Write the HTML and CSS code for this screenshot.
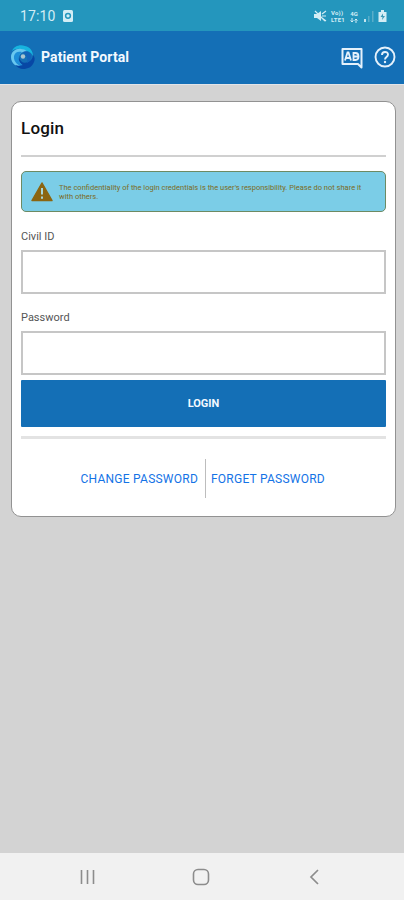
FILE: index.html
```
<!DOCTYPE html>
<html lang="en">
<head>
<meta charset="utf-8">
<title>Patient Portal</title>
<link rel="stylesheet" href="styles.css">
</head>
<body>
<div class="status">
  <span class="time">17:10</span>
  <svg class="app-dot" width="10" height="12" viewBox="0 0 10 12"><rect width="10" height="12" rx="1.5" fill="#d3edf5"/><circle cx="5" cy="5.8" r="2.4" fill="none" stroke="#2496bd" stroke-width="1.5"/></svg>
  <div class="signals">
    <svg width="13" height="12" viewBox="0 0 13 12"><path d="M0 4h3l4-3v10l-4-3H0z" fill="#d3edf5"/><path d="M1 1l10 10M8 4l4-3M8 6h4M8 8l4 3" stroke="#d3edf5" stroke-width="1.2"/></svg>
    <span class="net volte"><span>Vo))</span><span>LTE1</span></span>
    <span class="net lte"><span>4G</span><svg width="8" height="5" viewBox="0 0 8 5"><path d="M2 0v4M.5 2.500L2 4l1.500-1.500M6 5V1M4.500 2.500L6 1l1.500 1.500" fill="none" stroke="#d3edf5"/></svg></span>
    <svg class="bars" width="12" height="12" viewBox="0 0 12 12"><path d="M1 9h2v3H1z" fill="#c3e5ef"/><path d="M5 6h1.500v6H5zM9 1h1.500v11H9z" fill="#59adc9"/></svg>
    <svg class="battery" width="9" height="12" viewBox="0 0 9 12"><path d="M3 0h3v2h2.500v10h-8V2H3z" fill="#d3edf5"/><path d="M5 3.500L2.500 7h2L4 10l3-4H5z" fill="#3b98b5"/></svg>
  </div>
</div>
<header class="header">
  <svg class="logo" width="24" height="24" viewBox="0 0 24 24">
    <path d="M1 6C3 1 9-1 14 1c5 1 8 5 8 10-2-4-5-5-8-5C10 3 5 3 1 6z" fill="#17b4df"/>
    <path d="M0 12C0 6 6 3 10 4c3 0 5 1 6 3-5-1-9 2-8 7 0 4 3 7 7 8C7 24 0 19 0 12z" fill="#69c7ef"/>
    <path d="M3 11c1-4 4-5 8-4-4 3-4 8-1 12l4 3C8 22 2 17 3 11z" fill="#1e8ed8"/>
    <path d="M8 12c1 5 5 7 9 5 3-1 5-4 5-7 2 2 2 5 1 7-2 5-6 7-11 7-3 0-6-2-8-4 3 1 5 1 8 0-3-2-5-5-4-8z" fill="#0747a5"/>
    <path d="M12 7c4-2 8 1 8 5 0 3-2 5-4 6 1-4 0-7-4-11z" fill="#1163b9"/>
    <circle cx="12" cy="11.500" r="2.200" fill="#aac5cf"/>
  </svg>
  <h1 class="brand">Patient Portal</h1>
  <svg class="lang" width="22" height="22" viewBox="0 0 22 22"><path d="M1.500 2h19v18.500l-3.500-3.500H1.500z" fill="none" stroke="#e5f1fb" stroke-width="2" stroke-linejoin="round"/><path d="M4 13.500l2.500-8h1l2.500 8M5.200 11h4M12.500 13V6h2q3 0 3 3.500t-3 3.500zM12.500 9.500h5" fill="none" stroke="#e5f1fb" stroke-width="1.800"/></svg>
  <svg class="help" width="22" height="22" viewBox="0 0 22 22"><circle cx="11" cy="11" r="9.500" fill="none" stroke="#e5f1fb" stroke-width="1.900"/><path d="M8 9c0-4 6-4 6-.5 0 2.500-3 2.500-3 5" fill="none" stroke="#e5f1fb" stroke-width="1.900"/><circle cx="11" cy="16" r="1.200" fill="#e5f1fb"/></svg>
</header>
<main class="main">
  <form class="card">
    <h2 class="title">Login</h2>
    <div class="rule"></div>
    <div class="alert">
      <svg width="22" height="20" viewBox="0 0 22 20"><path d="M11 1L21 18.500H1z" fill="#8b6510" stroke="#8b6510" stroke-width="1.500" stroke-linejoin="round"/><path d="M11 6v6.500M11 14.500v2.300" stroke="#a9d6d8" stroke-width="2"/></svg>
      <p class="alert-text">The confidentiality of the login credentials is the user's responsibility. Please do not share it<br>with others.</p>
    </div>
    <label class="label" for="civil">Civil ID</label>
    <input class="field" id="civil" type="text">
    <label class="label" for="pass">Password</label>
    <input class="field" id="pass" type="password">
    <button class="submit" type="button">LOGIN</button>
    <div class="rule rule-light"></div>
    <div class="links">
      <a class="link change">CHANGE PASSWORD</a>
      <a class="link forget">FORGET PASSWORD</a>
    </div>
  </form>
</main>
<nav class="nav">
  <svg width="16" height="16" viewBox="0 0 16 16"><path d="M1.500 1v14M7.500 1v14M13.500 1v14" stroke="#8c8c8c" stroke-width="1.600"/></svg>
  <svg class="home" width="18" height="18" viewBox="0 0 18 18"><rect x="1.500" y="1.500" width="15" height="15" rx="4.500" fill="none" stroke="#8c8c8c" stroke-width="1.600"/></svg>
  <svg width="10" height="16" viewBox="0 0 10 16"><path d="M9 1L2 8l7 7" fill="none" stroke="#8c8c8c" stroke-width="1.700"/></svg>
</nav>
</body>
</html>
```
FILE: styles.css
```
* { box-sizing: border-box; }
body {
  margin: 0;
  height: 900px;
  display: flex;
  flex-direction: column;
  background: #d3d3d3;
  font-family: Roboto, "Liberation Sans", sans-serif;
}
h1, h2, p { margin: 0; }
svg { display: block; flex: none; }
.status {
  height: 31px;
  flex: none;
  display: flex;
  align-items: center;
  padding: 1px 17px 0 20px;
  background: #2496bd;
  color: #d3edf5;
}
.time { width: 36px; font-size: 14px; line-height: 16px; letter-spacing: 0.1px; white-space: nowrap; }
.app-dot { margin-left: 7px; }
.signals { margin-left: auto; display: flex; align-items: center; }
.net { display: flex; flex-direction: column; font-size: 6px; line-height: 7px; font-weight: 700; white-space: nowrap; }
.volte { margin-left: 4px; width: 15px; letter-spacing: 0.2px; }
.lte { margin-left: 3px; width: 10px; align-items: center; gap: 1px; }
.bars { margin-left: 4px; }
.battery { margin-left: 3px; }
.header {
  height: 53px;
  flex: none;
  display: flex;
  align-items: center;
  padding: 0 8px 0 11px;
  background: #146fb6;
  color: #f3f9ff;
}
.logo { margin-top: -1px; }
.brand { margin: -1px 0 0 6px; font-size: 14px; line-height: 18px; font-weight: 700; letter-spacing: 0.1px; white-space: nowrap; }
.lang { margin-left: auto; }
.help { margin: -1px 0 0 11px; }
.main {
  flex: 1;
  padding: 17px 8px 0 11px;
  border-top: 1px solid #e2e4e8;
}
.card {
  height: 416px;
  margin-top: -1px;
  padding: 16px 9px 0;
  border: 1px solid #929292;
  border-radius: 10px;
  background: #fff;
}
.title { height: 20px; font-size: 17px; line-height: 20px; font-weight: 500; letter-spacing: 0.2px; color: #111; }
.rule { height: 2px; margin-top: 17px; background: #d0d0d0; }
.alert {
  height: 41px;
  margin-top: 14px;
  padding: 0 9px;
  display: flex;
  align-items: center;
  border: 1px solid #6d8a63;
  border-radius: 5px;
  background: #7bcde7;
}
.alert-text { margin-left: 6px; font-size: 7.5px; line-height: 9px; color: #7c6c25; white-space: nowrap; }
.label { display: block; height: 14px; margin: 18px 0 6px; font-size: 11px; line-height: 14px; color: #555; }
.field {
  display: block;
  width: 100%;
  height: 44px;
  padding: 0 8px;
  border: 2px solid #c6c6c6;
  background: #fff;
  outline: none;
}
.field + .label { margin-top: 17px; }
.submit {
  display: block;
  width: 100%;
  height: 47px;
  margin-top: 5px;
  border: 0;
  border-radius: 1px;
  background: #146fb6;
  color: #f3f9ff;
  font: 700 11px/14px Roboto, sans-serif;
}
.rule-light { height: 3px; margin-top: 9px; background: #e3e3e3; }
.links { display: flex; height: 39px; margin-top: 20px; line-height: 41px; }
.link { font-size: 12px; font-weight: 400; letter-spacing: 0.24px; color: #1473e6; white-space: nowrap; }
.change { width: 185px; padding-right: 7px; border-right: 1px solid #bdbdbd; text-align: right; }
.forget { padding-left: 5px; }
.nav {
  height: 47px;
  flex: none;
  display: flex;
  align-items: center;
  padding: 1px 85px 0 80px;
  justify-content: space-between;
  background: #f1f1f1;
}
.home { margin-right: 3px; }
```
